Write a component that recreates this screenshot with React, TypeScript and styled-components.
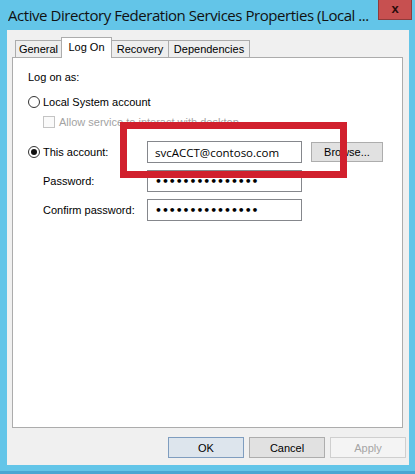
import styled, { createGlobalStyle } from "styled-components";

const GlobalStyle = createGlobalStyle`
  html, body {
    margin: 0;
    padding: 0;
    background: #63c5e8;
  }
  body {
    width: 415px;
    height: 474px;
    overflow: hidden;
  }
`;

const UI_FONT = `"Liberation Sans", Arial, sans-serif`;
const SEGOE = `"Open Sans", "Noto Sans", sans-serif`;

export default function App() {
  return (
    <>
      <GlobalStyle />
      <Style.Window>
        <Style.TitleBar>
          <Style.Title>Active Directory Federation Services Properties (Local ...</Style.Title>
          <Style.Close>x</Style.Close>
        </Style.TitleBar>

        <Style.Client>
          <Style.TabStrip>
            <Style.Tab $w={47}>General</Style.Tab>
            <Style.Tab $w={51} $active>
              Log On
            </Style.Tab>
            <Style.Tab $w={58}>Recovery</Style.Tab>
            <Style.Tab $w={82}>Dependencies</Style.Tab>
          </Style.TabStrip>

          <Style.Panel>
            <Style.Heading>Log on as:</Style.Heading>

            <Style.RadioRow>
              <Style.Radio />
              <Style.Label>Local System account</Style.Label>
            </Style.RadioRow>

            <Style.CheckRow>
              <Style.Checkbox />
              <Style.Label $disabled>Allow service to interact with desktop</Style.Label>
            </Style.CheckRow>

            <Style.FieldRow $top={13}>
              <Style.Radio $checked />
              <Style.FieldLabel $w={104}>This account:</Style.FieldLabel>
              <Style.TextBox>svcACCT@contoso.com</Style.TextBox>
              <Style.Browse>Browse...</Style.Browse>
            </Style.FieldRow>

            <Style.FieldRow $top={7} $indent>
              <Style.FieldLabel $w={104}>Password:</Style.FieldLabel>
              <Style.TextBox $dots>•••••••••••••••</Style.TextBox>
            </Style.FieldRow>

            <Style.FieldRow $top={7} $indent>
              <Style.FieldLabel $w={104}>Confirm password:</Style.FieldLabel>
              <Style.TextBox $dots>•••••••••••••••</Style.TextBox>
            </Style.FieldRow>
          </Style.Panel>

          <Style.ButtonRow>
            <Style.Button $variant="default">OK</Style.Button>
            <Style.Button>Cancel</Style.Button>
            <Style.Button $variant="disabled">Apply</Style.Button>
          </Style.ButtonRow>
        </Style.Client>

        <Style.Highlight />
      </Style.Window>
    </>
  );
}

const Style = {
  Window: styled.div`
    position: relative;
    width: 415px;
    height: 474px;
    box-sizing: border-box;
    padding: 0 6px 9px 7px;
    display: flex;
    flex-direction: column;
    background: #63c5e8;
    box-shadow: inset 0 -3px 0 #4aa6d2;
  `,
  TitleBar: styled.div`
    height: 30px;
    display: flex;
    align-items: flex-start;
  `,
  Title: styled.div`
    flex: 1;
    margin-left: 1px;
    padding-top: 5px;
    font-family: ${SEGOE};
    font-size: 15px;
    letter-spacing: -0.45px;
    line-height: 20px;
    color: #111;
    white-space: nowrap;
    overflow: hidden;
  `,
  Close: styled.div`
    width: 34px;
    height: 20px;
    margin-right: -3px;
    box-sizing: border-box;
    border: 1px solid #8e3b3b;
    border-top: none;
    background: #c75050;
    display: flex;
    align-items: center;
    justify-content: center;
    font-family: ${UI_FONT};
    font-weight: bold;
    font-size: 13px;
    line-height: 1;
    color: #2a0c0c;
    padding-bottom: 2px;
  `,
  Client: styled.div`
    flex: 1;
    display: flex;
    flex-direction: column;
    padding: 7px 6px 7px 5px;
    background: #f0f0f0;
  `,
  TabStrip: styled.div`
    position: relative;
    z-index: 1;
    height: 20px;
    display: flex;
    align-items: flex-end;
    padding-left: 3px;
  `,
  Tab: styled.div<{ $w: number; $active?: boolean }>`
    width: ${({ $w }) => $w}px;
    height: ${({ $active }) => ($active ? 21 : 17)}px;
    margin-bottom: ${({ $active }) => ($active ? -1 : 0)}px;
    box-sizing: border-box;
    border: 1px solid #acacac;
    border-bottom: none;
    background: ${({ $active }) => ($active ? "#ffffff" : "#eeeeee")};
    font-family: ${UI_FONT};
    font-size: 11px;
    line-height: ${({ $active }) => ($active ? 18 : 16)}px;
    text-align: center;
    color: #000;

    & + & {
      margin-left: -1px;
    }
  `,
  Panel: styled.div`
    flex: 1;
    box-sizing: border-box;
    border: 1px solid #acacac;
    background: #ffffff;
    padding: 12px 0 0 15px;
    display: flex;
    flex-direction: column;
  `,
  Heading: styled.div`
    font-family: ${UI_FONT};
    font-size: 11px;
    line-height: 14px;
    color: #000;
  `,
  RadioRow: styled.div`
    margin-top: 11px;
    height: 14px;
    display: flex;
    align-items: center;
  `,
  Radio: styled.span<{ $checked?: boolean }>`
    width: 12px;
    height: 12px;
    margin-right: 3px;
    box-sizing: border-box;
    border: 1px solid #333;
    border-radius: 50%;
    background: #fff;
    display: flex;
    align-items: center;
    justify-content: center;
    flex-shrink: 0;

    &::after {
      content: "";
      width: 6px;
      height: 6px;
      border-radius: 50%;
      background: ${({ $checked }) => ($checked ? "#111" : "transparent")};
    }
  `,
  Label: styled.span<{ $disabled?: boolean }>`
    font-family: ${UI_FONT};
    font-size: 11px;
    line-height: 14px;
    color: ${({ $disabled }) => ($disabled ? "#a3a3a3" : "#000")};
    white-space: nowrap;
  `,
  CheckRow: styled.div`
    margin-top: 6px;
    height: 13px;
    padding-left: 15px;
    display: flex;
    align-items: center;
    gap: 4px;
  `,
  Checkbox: styled.span`
    width: 12px;
    height: 12px;
    box-sizing: border-box;
    border: 1px solid #c4c4c4;
    background: #fafafa;
  `,
  FieldRow: styled.div<{ $top: number; $indent?: boolean }>`
    margin-top: ${({ $top }) => $top}px;
    height: 22px;
    display: flex;
    align-items: center;
    padding-left: ${({ $indent }) => ($indent ? 15 : 0)}px;
  `,
  FieldLabel: styled.span<{ $w: number }>`
    width: ${({ $w }) => $w}px;
    font-family: ${UI_FONT};
    font-size: 11px;
    color: #000;
    white-space: nowrap;
  `,
  TextBox: styled.div<{ $dots?: boolean }>`
    width: 155px;
    height: 22px;
    box-sizing: border-box;
    border: 1px solid #85878c;
    background: #fff;
    padding-left: 7px;
    display: flex;
    align-items: center;
    font-family: ${({ $dots }) => ($dots ? `"DejaVu Sans", sans-serif` : SEGOE)};
    font-size: ${({ $dots }) => ($dots ? "10.8px" : "11.5px")};
    font-weight: ${({ $dots }) => ($dots ? "bold" : "normal")};
    color: #000;
    white-space: nowrap;
  `,
  Browse: styled.div`
    width: 72px;
    height: 20px;
    margin-left: 9px;
    box-sizing: border-box;
    border: 1px solid #adadad;
    background: #e1e1e1;
    display: flex;
    align-items: center;
    justify-content: center;
    font-family: ${UI_FONT};
    font-size: 11px;
    color: #000;
  `,
  ButtonRow: styled.div`
    margin-top: 9px;
    margin-right: -3px;
    display: flex;
    justify-content: flex-end;
    gap: 5px;
  `,
  Button: styled.div<{ $variant?: "default" | "disabled" }>`
    width: 76px;
    height: 21px;
    box-sizing: border-box;
    border: 1px solid
      ${({ $variant }) => ($variant === "default" ? "#7f9dbf" : $variant === "disabled" ? "#cfcfcf" : "#adadad")};
    background: ${({ $variant }) => ($variant === "default" ? "#dde5ed" : $variant === "disabled" ? "#f4f4f4" : "#e1e1e1")};
    display: flex;
    align-items: center;
    justify-content: center;
    font-family: ${UI_FONT};
    font-size: 11px;
    color: ${({ $variant }) => ($variant === "disabled" ? "#a5a5a5" : "#000")};
  `,
  Highlight: styled.div`
    position: absolute;
    left: 120px;
    top: 122px;
    width: 227px;
    height: 56px;
    box-sizing: border-box;
    border: 7px solid #d1202d;
    pointer-events: none;
  `,
};
